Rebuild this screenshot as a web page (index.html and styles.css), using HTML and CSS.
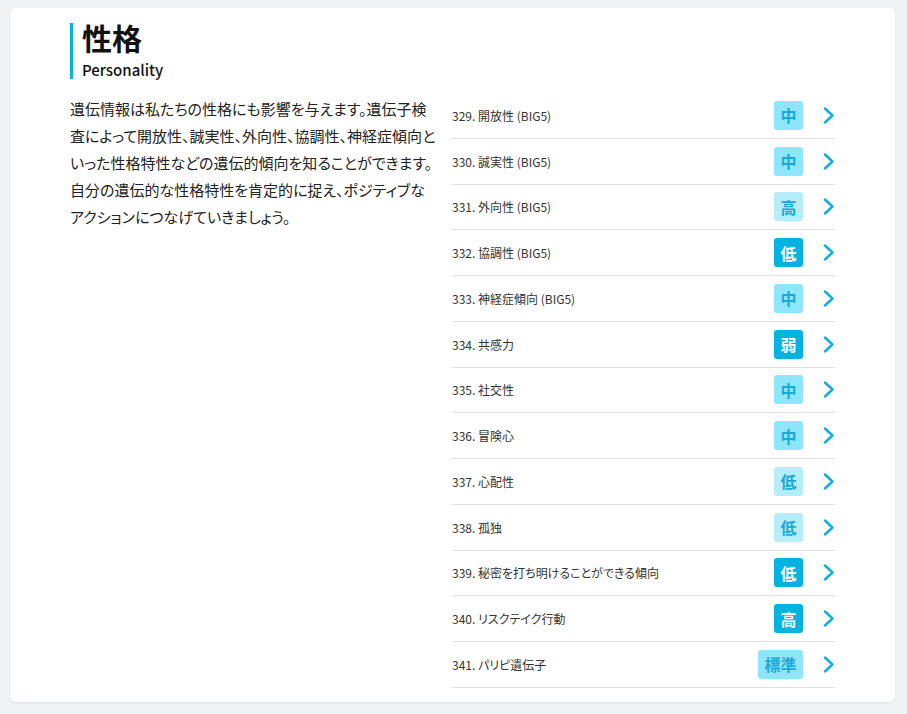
FILE: index.html
```html
<!DOCTYPE html>
<html lang="ja">
<head>
<meta charset="utf-8">
<title>性格 Personality</title>
<link rel="stylesheet" href="styles.css">
</head>
<body>
<div class="card">
  <header class="heading">
    <h1 class="title">性格</h1>
    <p class="subtitle">Personality</p>
  </header>
  <div class="content">
    <p class="intro">遺伝情報は私たちの性格にも影響を与えます。遺伝子検査によって開放性、誠実性、外向性、協調性、神経症傾向といった性格特性などの遺伝的傾向を知ることができます。自分の遺伝的な性格特性を肯定的に捉え、ポジティブなアクションにつなげていきましょう。</p>
    <ul class="list">
      <li class="row"><span class="label">329. 開放性 (BIG5)</span><span class="badge mid">中</span><svg class="chev" viewBox="0 0 12 17"><path d="M2 1.5 L9.5 8.5 L2 15.5"/></svg></li>
      <li class="row"><span class="label">330. 誠実性 (BIG5)</span><span class="badge mid">中</span><svg class="chev" viewBox="0 0 12 17"><path d="M2 1.5 L9.5 8.5 L2 15.5"/></svg></li>
      <li class="row"><span class="label">331. 外向性 (BIG5)</span><span class="badge pale">高</span><svg class="chev" viewBox="0 0 12 17"><path d="M2 1.5 L9.5 8.5 L2 15.5"/></svg></li>
      <li class="row"><span class="label">332. 協調性 (BIG5)</span><span class="badge strong">低</span><svg class="chev" viewBox="0 0 12 17"><path d="M2 1.5 L9.5 8.5 L2 15.5"/></svg></li>
      <li class="row"><span class="label">333. 神経症傾向 (BIG5)</span><span class="badge mid">中</span><svg class="chev" viewBox="0 0 12 17"><path d="M2 1.5 L9.5 8.5 L2 15.5"/></svg></li>
      <li class="row"><span class="label">334. 共感力</span><span class="badge strong">弱</span><svg class="chev" viewBox="0 0 12 17"><path d="M2 1.5 L9.5 8.5 L2 15.5"/></svg></li>
      <li class="row"><span class="label">335. 社交性</span><span class="badge mid">中</span><svg class="chev" viewBox="0 0 12 17"><path d="M2 1.5 L9.5 8.5 L2 15.5"/></svg></li>
      <li class="row"><span class="label">336. 冒険心</span><span class="badge mid">中</span><svg class="chev" viewBox="0 0 12 17"><path d="M2 1.5 L9.5 8.5 L2 15.5"/></svg></li>
      <li class="row"><span class="label">337. 心配性</span><span class="badge pale">低</span><svg class="chev" viewBox="0 0 12 17"><path d="M2 1.5 L9.5 8.5 L2 15.5"/></svg></li>
      <li class="row"><span class="label">338. 孤独</span><span class="badge pale">低</span><svg class="chev" viewBox="0 0 12 17"><path d="M2 1.5 L9.5 8.5 L2 15.5"/></svg></li>
      <li class="row"><span class="label">339. 秘密を打ち明けることができる傾向</span><span class="badge strong">低</span><svg class="chev" viewBox="0 0 12 17"><path d="M2 1.5 L9.5 8.5 L2 15.5"/></svg></li>
      <li class="row"><span class="label">340. リスクテイク行動</span><span class="badge strong">高</span><svg class="chev" viewBox="0 0 12 17"><path d="M2 1.5 L9.5 8.5 L2 15.5"/></svg></li>
      <li class="row"><span class="label">341. パリピ遺伝子</span><span class="badge mid wide">標準</span><svg class="chev" viewBox="0 0 12 17"><path d="M2 1.5 L9.5 8.5 L2 15.5"/></svg></li>
    </ul>
  </div>
</div>
</body>
</html>
```

FILE: styles.css
```css
* { box-sizing: border-box; }
html, body { margin: 0; padding: 0; }
body {
  background: #eff3f6;
  font-family: "Noto Sans CJK JP", "Noto Sans", sans-serif;
  color: #222;
  padding: 8px 12px 0 10px;
  height: 714px;
  overflow: hidden;
}
.card {
  background: #fff;
  border-radius: 6px;
  box-shadow: 0 1px 3px rgba(0, 0, 0, 0.08);
  padding: 15px 60px 15px 60px;
  height: 694px;
}
.heading {
  border-left: 3px solid #00b4e4;
  padding-left: 9px;
  height: 56px;
}
.title {
  margin: 0;
  font-size: 30px;
  font-weight: 700;
  line-height: 28px;
  color: #111;
}
.subtitle {
  margin: 9px 0 0 0;
  font-size: 15px;
  font-weight: 500;
  line-height: 20px;
  color: #111;
}
.content {
  display: grid;
  grid-template-columns: 368px 1fr;
  column-gap: 14px;
  margin-top: 14px;
}
.intro {
  margin: 2px 0 0 0;
  font-size: 15px;
  line-height: 27px;
  color: #222;
  font-feature-settings: "palt";
}
.list {
  list-style: none;
  margin: 0;
  padding: 0;
}
.row {
  display: flex;
  align-items: center;
  height: 45.75px;
  border-bottom: 1px solid #e2e2e2;
}
.label {
  flex: 1;
  font-size: 12px;
  color: #333;
  font-feature-settings: "palt";
}
.badge {
  width: 29px;
  height: 29px;
  border-radius: 3px;
  display: flex;
  align-items: center;
  justify-content: center;
  font-size: 16px;
  font-weight: 700;
  margin-right: 20px;
}
.badge.wide { width: 45px; }
.badge.mid { background: #8de6fd; color: #1aa9d6; }
.badge.pale { background: #b5edfb; color: #1aa9d6; }
.badge.strong { background: #00b3e0; color: #fff; }
.chev {
  width: 12px;
  height: 17px;
  flex: none;
}
.chev path {
  fill: none;
  stroke: #10aee0;
  stroke-width: 2.4;
  stroke-linecap: round;
  stroke-linejoin: round;
}
```
